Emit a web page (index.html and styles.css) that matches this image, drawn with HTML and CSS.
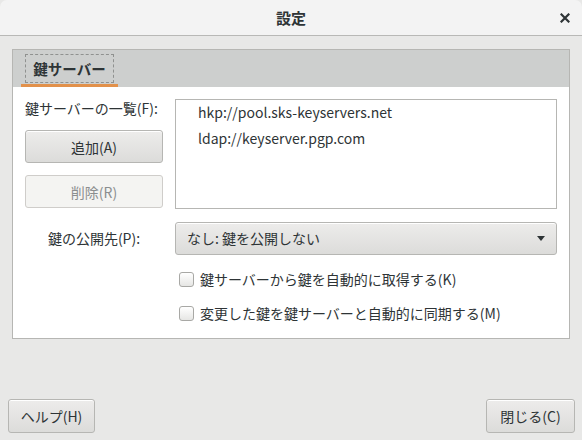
FILE: index.html
```html
<!DOCTYPE html>
<html lang="ja">
<head>
<meta charset="utf-8">
<title>設定</title>
<link rel="stylesheet" href="styles.css">
</head>
<body>
<div class="window">
  <header class="titlebar">
    <span class="title">設定</span>
    <span class="close" aria-label="閉じる">
      <svg width="10" height="10" viewBox="0 0 10 10"><path d="M1.5 1.5 L8.5 8.5 M8.5 1.5 L1.5 8.5" stroke="#2e3436" stroke-width="2.2" stroke-linecap="square" fill="none"/></svg>
    </span>
  </header>
  <main class="body">
    <section class="notebook">
      <div class="tabs">
        <div class="tab"><span class="tab-focus">鍵サーバー</span></div>
      </div>
      <div class="page">
        <div class="left">
          <span class="label">鍵サーバーの一覧(F):</span>
          <button class="btn">追加(A)</button>
          <button class="btn disabled">削除(R)</button>
        </div>
        <ul class="list">
          <li>hkp://pool.sks-keyservers.net</li>
          <li>ldap://keyserver.pgp.com</li>
        </ul>
        <span class="pub-label">鍵の公開先(P):</span>
        <div class="combo">
          <span>なし: 鍵を公開しない</span>
          <span class="arrow"></span>
        </div>
        <div class="checks">
          <label class="check"><span class="box"></span>鍵サーバーから鍵を自動的に取得する(K)</label>
          <label class="check"><span class="box"></span>変更した鍵を鍵サーバーと自動的に同期する(M)</label>
        </div>
      </div>
    </section>
    <footer class="actions">
      <button class="btn help">ヘルプ(H)</button>
      <button class="btn closebtn">閉じる(C)</button>
    </footer>
  </main>
</div>
</body>
</html>
```

FILE: styles.css
```css
* { box-sizing: border-box; }
html, body { margin: 0; padding: 0; background: #f6f6f6; }
body {
  font-family: "Noto Sans CJK JP", "Noto Sans", sans-serif;
  font-size: 14px;
  color: #2e3436;
}
.window {
  width: 582px;
  height: 440px;
  display: flex;
  flex-direction: column;
  background: #e8e8e7;
}
.titlebar {
  height: 36px;
  flex: none;
  background: #f3f3f3;
  border-bottom: 1px solid #b8b8b6;
  border-radius: 7px 7px 0 0;
  display: flex;
  align-items: center;
  justify-content: center;
  position: relative;
}
.title {
  font-weight: bold;
  font-size: 15px;
  line-height: 18px;
}
.close {
  position: absolute;
  right: 12px;
  top: 13px;
  width: 10px;
  height: 10px;
  display: flex;
}
.body {
  flex: 1;
  display: flex;
  flex-direction: column;
}
.notebook {
  margin: 13px 12px 0 12px;
  height: 290px;
  border: 1px solid #b6b6b3;
  display: flex;
  flex-direction: column;
  background: #ffffff;
}
.tabs {
  height: 37px;
  flex: none;
  background: #cdcfce;
  display: flex;
  padding-left: 8px;
}
.tab {
  width: 97px;
  height: 37px;
  padding: 4px 4px 1px 4px;
  border-bottom: 3px solid #e2914b;
}
.tab-focus {
  display: flex;
  align-items: center;
  justify-content: center;
  height: 29px;
  border: 1px dashed #8f918f;
  font-weight: bold;
  font-size: 14.5px;
  padding-bottom: 1px;
}
.page {
  flex: 1;
  padding: 12px;
  display: grid;
  grid-template-columns: 138px 1fr;
  grid-template-rows: 110px 33px auto;
  column-gap: 12px;
  row-gap: 13px;
}
.left {
  display: flex;
  flex-direction: column;
}
.label {
  line-height: 18px;
  height: 18px;
  margin-bottom: 13px;
  white-space: nowrap;
}
.btn {
  font: inherit;
  color: #2e3436;
  height: 33px;
  border: 1px solid #b6b6b3;
  border-radius: 3px;
  background: linear-gradient(#edeceb, #dcdcda);
  box-shadow: inset 0 1px #ffffff;
  padding: 0;
  line-height: 18px;
}
.left .btn + .btn { margin-top: 12px; }
.btn.disabled {
  background: #f4f4f2;
  border-color: #cfcdca;
  color: #8b8e8f;
  box-shadow: none;
}
.list {
  margin: 0;
  padding: 0;
  list-style: none;
  border: 1px solid #b6b6b3;
  background: #ffffff;
}
.list li {
  height: 26px;
  line-height: 24px;
  padding-left: 22px;
}
.pub-label {
  align-self: center;
  justify-self: center;
  line-height: 18px;
  padding-bottom: 1px;
}
.combo {
  border: 1px solid #b6b6b3;
  border-radius: 3px;
  background: linear-gradient(#edeceb, #dcdcda);
  box-shadow: inset 0 1px #ffffff;
  display: flex;
  align-items: center;
  justify-content: space-between;
  padding: 0 11px 1px 11px;
}
.arrow {
  width: 0;
  height: 0;
  border-left: 4.5px solid transparent;
  border-right: 4.5px solid transparent;
  border-top: 5px solid #2e3436;
}
.checks {
  grid-column: 2;
  display: flex;
  flex-direction: column;
  gap: 12px;
  padding-left: 4px;
}
.check {
  display: flex;
  align-items: center;
  height: 22px;
  line-height: 18px;
  white-space: nowrap;
}
.box {
  width: 15px;
  height: 15px;
  border: 1px solid #a8a8a5;
  border-radius: 3px;
  background: linear-gradient(#ffffff, #e6e6e4);
  margin-right: 6px;
  flex: none;
}
.actions {
  margin-top: auto;
  display: flex;
  justify-content: space-between;
  padding: 0 7px 7px 8px;
}
.actions .btn { height: 34px; }
.help { width: 87px; }
.closebtn { width: 89px; }
```
